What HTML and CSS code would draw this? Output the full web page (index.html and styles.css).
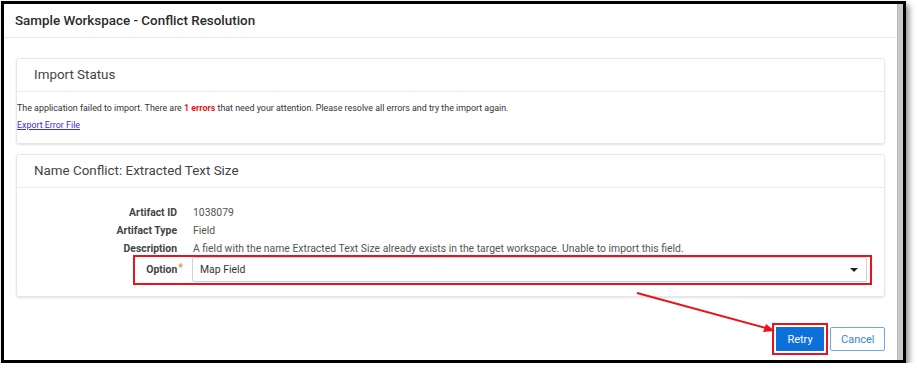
FILE: index.html
```html
<!DOCTYPE html>
<html lang="en">
<head>
<meta charset="UTF-8" />
<title>Sample Workspace - Conflict Resolution</title>
<link rel="stylesheet" href="styles.css">
</head>
<body>

<div class="frame">
  <div class="modal">
    <div class="modal-header">Sample Workspace - Conflict Resolution</div>

    <div class="modal-body">
      <section class="card">
        <div class="card-header">Import Status</div>
        <div class="card-body status">
          <p>The application failed to import. There are <span class="err">1 errors</span> that need your attention. Please resolve all errors and try the import again.</p>
          <a href="#" class="export-link">Export Error File</a>
        </div>
      </section>

      <section class="card">
        <div class="card-header">Name Conflict: Extracted Text Size</div>
        <div class="card-body fields">
          <div class="row">
            <span class="label">Artifact ID</span>
            <span class="value">1038079</span>
          </div>
          <div class="row">
            <span class="label">Artifact Type</span>
            <span class="value">Field</span>
          </div>
          <div class="row">
            <span class="label">Description</span>
            <span class="value">A field with the name Extracted Text Size already exists in the target workspace. Unable to import this field.</span>
          </div>
          <div class="row option-row">
            <span class="label">Option<span class="req">*</span></span>
            <div class="select">
              <span>Map Field</span>
              <span class="caret"></span>
            </div>
          </div>
        </div>
      </section>
    </div>

    <div class="modal-footer">
      <button class="btn btn-primary">Retry</button>
      <button class="btn btn-outline">Cancel</button>
    </div>
  </div>
  <div class="backdrop-strip"></div>

  <!-- annotation arrow pointing at Retry -->
  <svg class="arrow" width="899" height="356" viewBox="0 0 899 356">
    <line x1="633" y1="289" x2="762" y2="324" stroke="#e8141b" stroke-width="2" />
    <polygon points="771,327 759,328 762,320" fill="#e8141b" />
  </svg>
</div>

</body>
</html>
```

FILE: styles.css
```css
body {
  margin: 0;
  background: #fff;
  font-family: Roboto, "Liberation Sans", sans-serif;
  color: #333;
}
.frame {
  position: relative;
  display: flex;
  margin: 1px 0 0 1px;
  width: 899px;
  height: 356px;
  border: 3px solid #000;
  box-shadow: 3px 4px 6px rgba(0, 0, 0, 0.45);
}
.modal {
  flex: 1;
  display: flex;
  flex-direction: column;
  background: #fff;
}
.backdrop-strip {
  width: 5px;
  background: #c7cacd;
  border-left: 1px solid #b5b8bc;
}
.modal-header {
  height: 33px;
  line-height: 33px;
  padding-left: 11px;
  font-size: 13.4px;
  font-weight: 500;
  color: #2b2b2b;
  border-bottom: 1px solid #e6ebf1;
}
.modal-body {
  padding: 20px 12px 0;
  display: flex;
  flex-direction: column;
  gap: 10px;
}
.card {
  border: 1px solid #e3e8ee;
  border-radius: 3px;
  box-shadow: 0 1px 2px rgba(0, 0, 0, 0.12);
}
.card-header {
  height: 32px;
  line-height: 32px;
  padding-left: 17px;
  font-size: 13.4px;
  color: #444;
  border-bottom: 1px solid #e6ebf1;
}
.status {
  padding: 8px 0 9px;
  font-size: 8.9px;
  line-height: 17px;
}
.status p {
  margin: 0;
}
.err {
  color: #e8141b;
  font-weight: bold;
}
.export-link {
  color: #3b2fe0;
}
.fields {
  padding: 15px 17px 14px 0;
  font-size: 10.4px;
}
.row {
  display: flex;
  align-items: center;
  gap: 16px;
  height: 18px;
}
.label {
  width: 160px;
  flex-shrink: 0;
  text-align: right;
  font-weight: bold;
  color: #444;
}
.value {
  color: #555;
}
.req {
  color: #f08a24;
  margin-right: -6px;
  margin-left: 1px;
  position: relative;
  top: -2px;
}
.option-row {
  position: relative;
  height: 25px;
  gap: 15px;
}
.option-row::after {
  content: "";
  position: absolute;
  left: 116px;
  right: -5px;
  top: -2px;
  bottom: -3px;
  border: 2px solid #e8141b;
}
.select {
  flex: 1;
  height: 23px;
  display: flex;
  align-items: center;
  justify-content: space-between;
  padding: 0 8px 0 7px;
  border: 1px solid #c9d3e1;
  border-radius: 2px;
  color: #333;
}
.caret {
  width: 0;
  height: 0;
  border-left: 4px solid transparent;
  border-right: 4px solid transparent;
  border-top: 4px solid #222;
}
.modal-footer {
  display: flex;
  justify-content: flex-end;
  gap: 6px;
  padding: 30px 12px 0;
}
.btn {
  height: 24px;
  padding: 0 10px;
  font-family: Roboto, "Liberation Sans", sans-serif;
  font-size: 11px;
  border-radius: 2px;
  cursor: pointer;
}
.btn-primary {
  width: 48px;
  background: #0b70d9;
  border: 1px solid #0b70d9;
  border-radius: 0;
  color: #fff;
  box-shadow: 0 0 0 2px #fff, 0 0 0 4px #e8141b;
}
.btn-outline {
  width: 55px;
  background: #fff;
  border: 1px solid #6aa8ea;
  color: #3d86d6;
}
.arrow {
  position: absolute;
  left: 0;
  top: 0;
  pointer-events: none;
}
```
